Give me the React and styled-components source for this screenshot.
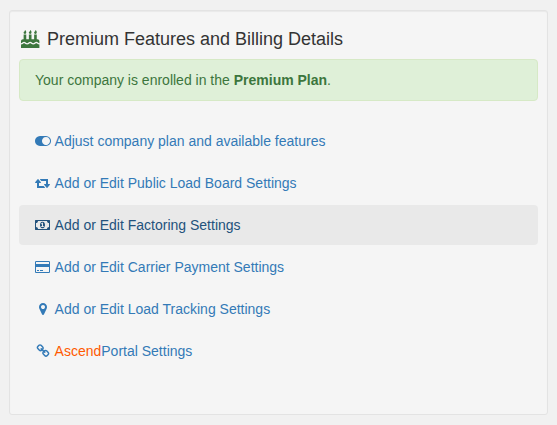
import React from "react";
import styled, { createGlobalStyle } from "styled-components";

const GlobalStyle = createGlobalStyle`
  * {
    box-sizing: border-box;
  }

  body {
    margin: 0;
    padding: 10px 9px;
    background: #f1f1f1;
    color: #333;
    font-family: "Liberation Sans", Arial, sans-serif;
    font-size: 14px;
    line-height: 20px;
  }
`;

const Well = styled.section`
  height: 405px;
  padding: 9px;
  background: #f5f5f5;
  border: 1px solid #e3e3e3;
  border-radius: 3px;
  box-shadow: inset 0 1px 1px rgba(0, 0, 0, 0.05);
`;

const Title = styled.h4`
  display: flex;
  align-items: center;
  gap: 5px;
  height: 20px;
  margin: 9px 0 10px;
  font-size: 18px;
  font-weight: 400;
`;

const IconBox = styled.span`
  display: flex;
  flex: none;
  justify-content: center;
  width: ${(props) => props.$width || 17.9}px;
  color: ${(props) => props.$color || "inherit"};
`;

const Glyph = styled.svg`
  display: block;
  flex: none;
  fill: currentColor;
`;

const Alert = styled.div`
  margin-bottom: 20px;
  padding: 10px 15px;
  background: #dff0d8;
  border: 1px solid #d6e9c6;
  border-radius: 4px;
  color: #3c763d;
`;

const NavList = styled.ul`
  display: flex;
  flex-direction: column;
  gap: 2px;
  margin: 0;
  padding: 0;
  list-style: none;
`;

const NavLink = styled.a`
  display: flex;
  align-items: center;
  gap: 2.7px;
  height: 40px;
  padding: 10px 15px;
  border-radius: 4px;
  background: ${(props) => (props.$active ? "#e9e9e9" : "transparent")};
  color: ${(props) => (props.$active ? "#23527c" : "#337ab7")};
  text-decoration: none;
`;

const Brand = styled.span`
  color: #ff5a00;
`;

const icons = {
  cake: {
    width: 1792,
    path: "M1792 1408v384h-1792v-384q45 0 85-14t59-27.5 47-37.5q30-27 51.5-38t56.5-11q34 0 55.5 11t51.5 38q29 25 47.5 38t58.5 27 85 14q45 0 85.5-14t58.5-27 48-38q30-27 51.5-38t55.5-11 55.5 11 51.5 38q29 25 48 38t58.5 27 85.5 14 85-14 58.5-27 47.5-38q30-27 51.5-38t55.5-11 56.5 11 51.5 38q28 24 47 37.5t59 27.5 85 14zM1792 1088v192q-34 0-55.5-11t-51.5-38q-28-24-47-37.5t-59-27.5-85-14-85 14-59 27.5-47 37.5q-30 27-51.5 38t-56.5 11-55.5-11-51.5-38q-29-25-48-38t-58.5-27-85.5-14-85.5 14-58.5 27-48 38q-30 27-51.5 38t-55.5 11-56.5-11-51.5-38q-28-24-47-37.5t-59-27.5-85-14-85 14-59 27.5-47 37.5q-30 27-51.5 38t-55.5 11v-192q0-80 56-136t136-56h64v-448h256v448h256v-448h256v448h256v-448h256v448h64q80 0 136 56t56 136zM512 224q0 77-36 118.5t-92 41.5q-53 0-90.5-37.5t-37.5-90.5q0-29 9.5-51t23.5-34 31-28 31-31.5 23.5-44.5 9.5-67q38 0 83 74t45 150zM1024 224q0 77-36 118.5t-92 41.5q-53 0-90.5-37.5t-37.5-90.5q0-29 9.5-51t23.5-34 31-28 31-31.5 23.5-44.5 9.5-67q38 0 83 74t45 150zM1536 224q0 77-36 118.5t-92 41.5q-53 0-90.5-37.5t-37.5-90.5q0-29 9.5-51t23.5-34 31-28 31-31.5 23.5-44.5 9.5-67q38 0 83 74t45 150z",
  },
  toggle: {
    width: 2048,
    path: "M0 896q0-130 51-248.5t136.5-204 204-136.5 248.5-51h768q130 0 248.5 51t204 136.5 136.5 204 51 248.5-51 248.5-136.5 204-204 136.5-248.5 51h-768q-130 0-248.5-51t-204-136.5-136.5-204-51-248.5zm1408 512q104 0 198.5-40.5t163.5-109.5 109.5-163.5 40.5-198.5-40.5-198.5-109.5-163.5-163.5-109.5-198.5-40.5-198.5 40.5-163.5 109.5-109.5 163.5-40.5 198.5 40.5 198.5 109.5 163.5 163.5 109.5 198.5 40.5z",
  },
  retweet: {
    width: 1920,
    path: "M1280 1504q0 13-9.5 22.5t-22.5 9.5h-960q-8 0-13.5-2t-9-7-5.5-8-3-11.5-1-11.5v-600h-192q-26 0-45-19t-19-45q0-24 15-41l320-384q19-22 49-22t49 22l320 384q15 17 15 41 0 26-19 45t-45 19h-192v384h576q16 0 25 11l160 192q7 10 7 21zm640-416q0 24-15 41l-320 384q-20 23-49 23t-49-23l-320-384q-15-17-15-41 0-26 19-45t45-19h192v-384h-576q-16 0-25-12l-160-192q-7-9-7-20 0-13 9.5-22.5t22.5-9.5h960q8 0 13.5 2t9 7 5.5 8 3 11.5 1 11.5v600h192q26 0 45 19t19 45z",
  },
  money: {
    width: 1920,
    path: "M768 1152h384v-96h-128v-448h-114l-148 137 77 80q42-37 55-57h2v288h-128v96zm512-256q0 70-21 142t-59.5 134-101.5 101-138 39-138-39-101.5-101-59.5-134-21-142 21-142 59.5-134 101.5-101 138-39 138 39 101.5 101 59.5 134 21 142zm512 256v-512q-106 0-181-75t-75-181h-1152q0 106-75 181t-181 75v512q106 0 181 75t75 181h1152q0-106 75-181t181-75zm128-832v1152q0 26-19 45t-45 19h-1792q-26 0-45-19t-19-45v-1152q0-26 19-45t45-19h1792q26 0 45 19t19 45z",
  },
  card: {
    width: 1920,
    path: "M1760 128q66 0 113 47t47 113v1216q0 66-47 113t-113 47h-1600q-66 0-113-47t-47-113v-1216q0-66 47-113t113-47h1600zm-1600 128q-13 0-22.5 9.5t-9.5 22.5v224h1664v-224q0-13-9.5-22.5t-22.5-9.5h-1600zm1600 1280q13 0 22.5-9.5t9.5-22.5v-608h-1664v608q0 13 9.5 22.5t22.5 9.5h1600zm-1504-128v-128h256v128h-256zm384 0v-128h384v128h-384z",
  },
  marker: {
    width: 1024,
    path: "M768 640q0-106-75-181t-181-75-181 75-75 181 75 181 181 75 181-75 75-181zm256 0q0 109-33 179l-364 774q-16 33-47.5 52t-67.5 19-67.5-19-46.5-52l-365-774q-33-70-33-179 0-212 150-362t362-150 362 150 150 362z",
  },
  chain: {
    width: 1792,
    path: "M1520 1216q0-40-28-68l-208-208q-28-28-68-28-42 0-72 32 3 3 19 18.5t21.5 21.5 15 19 13 25.5 3.5 27.5q0 40-28 68t-68 28q-15 0-27.5-3.5t-25.5-13-19-15-21.5-21.5-18.5-19q-33 31-33 73 0 40 28 68l206 207q27 27 68 27 40 0 68-26l147-146q28-28 28-67zm-703-705q0-40-28-68l-206-207q-28-28-68-28-39 0-68 27l-147 146q-28 28-28 67 0 40 28 68l208 208q27 27 68 27 42 0 72-31-3-3-19-18.5t-21.5-21.5-15-19-13-25.5-3.5-27.5q0-40 28-68t68-28q15 0 27.5 3.5t25.5 13 19 15 21.5 21.5 18.5 19q33-31 33-73zm895 705q0 120-85 203l-147 146q-83 83-203 83-121 0-204-85l-206-207q-83-83-83-203 0-123 88-209l-88-88q-86 88-208 88-120 0-204-84l-208-208q-84-84-84-204t85-203l147-146q83-83 203-83 121 0 204 85l206 207q83 83 83 203 0 123-88 209l88 88q86-88 208-88 120 0 204 84l208 208q84 84 84 204z",
  },
};

const links = [
  { icon: "toggle", label: "Adjust company plan and available features" },
  { icon: "retweet", label: "Add or Edit Public Load Board Settings" },
  { icon: "money", label: "Add or Edit Factoring Settings", active: true },
  { icon: "card", label: "Add or Edit Carrier Payment Settings" },
  { icon: "marker", label: "Add or Edit Load Tracking Settings" },
  { icon: "chain", brand: "Ascend", label: "Portal Settings" },
];

const Icon = ({ name, size = 14 }) => {
  const { width, path } = icons[name];

  return (
    <Glyph
      width={(width / 1792) * size}
      height={size}
      viewBox={`0 0 ${width} 1792`}
      aria-hidden="true"
    >
      <path d={path} />
    </Glyph>
  );
};

const App = () => {
  return (
    <>
      <GlobalStyle />
      <Well>
        <Title>
          <IconBox $width={22.9} $color="#3c763d">
            <Icon name="cake" size={18.4} />
          </IconBox>
          Premium Features and Billing Details
        </Title>
        <Alert>
          Your company is enrolled in the <strong>Premium Plan</strong>.
        </Alert>
        <NavList>
          {links.map((link) => (
            <li key={link.icon}>
              <NavLink href="#" $active={link.active}>
                <IconBox>
                  <Icon name={link.icon} />
                </IconBox>
                <span>
                  {link.brand && <Brand>{link.brand}</Brand>}
                  {link.label}
                </span>
              </NavLink>
            </li>
          ))}
        </NavList>
      </Well>
    </>
  );
};

export default App;
